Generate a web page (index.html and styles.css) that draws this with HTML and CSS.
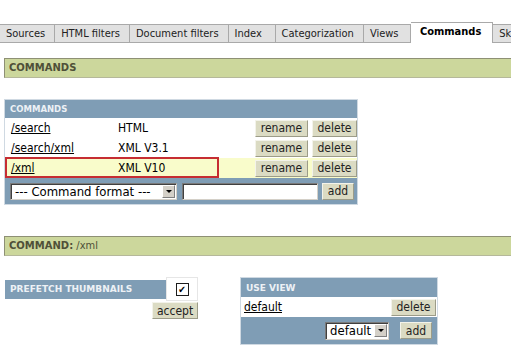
FILE: index.html
```html
<!DOCTYPE html>
<html lang="en">
<head>
    <meta charset="UTF-8">
    <title>Commands</title>
    <link rel="stylesheet" href="styles.css">
</head>
<body>
<div class="tabs">
    <a class="tab" href="#">Sources</a>
    <a class="tab" href="#">HTML filters</a>
    <a class="tab" href="#">Document filters</a>
    <a class="tab" href="#">Index</a>
    <a class="tab" href="#">Categorization</a>
    <a class="tab" href="#">Views</a>
    <a class="tab active" href="#">Commands</a>
    <a class="tab" href="#">Skins</a>
</div>

<div class="bar"><b>COMMANDS</b></div>

<div class="box commands">
    <div class="box-head">COMMANDS</div>
    <div class="row">
        <div class="cells">
            <a class="cmd" href="#">/search</a>
            <span class="fmt">HTML</span>
        </div>
        <button class="btn rename">rename</button>
        <button class="btn del">delete</button>
    </div>
    <div class="row">
        <div class="cells">
            <a class="cmd" href="#">/search/xml</a>
            <span class="fmt">XML V3.1</span>
        </div>
        <button class="btn rename">rename</button>
        <button class="btn del">delete</button>
    </div>
    <div class="row current">
        <div class="cells selected">
            <a class="cmd" href="#">/xml</a>
            <span class="fmt">XML V10</span>
        </div>
        <button class="btn rename">rename</button>
        <button class="btn del">delete</button>
    </div>
    <div class="box-foot">
        <div class="select wide"><span>--- Command format ---</span><i class="arrow"></i></div>
        <input class="name" type="text">
        <button class="btn add">add</button>
    </div>
</div>

<div class="bar second"><b>COMMAND:</b> /xml</div>

<div class="details">
    <div class="prefetch">
        <div class="prefetch-line">
            <div class="box-head">PREFETCH THUMBNAILS</div>
            <div class="check-cell"><span class="check">&#10004;</span></div>
        </div>
        <button class="btn accept">accept</button>
    </div>

    <div class="box views">
        <div class="box-head">USE VIEW</div>
        <div class="row">
            <a class="cmd" href="#">default</a>
            <button class="btn del">delete</button>
        </div>
        <div class="box-foot">
            <div class="select small"><span>default</span><i class="arrow"></i></div>
            <button class="btn add">add</button>
        </div>
    </div>
</div>
</body>
</html>
```

FILE: styles.css
```css
body {
    margin: 0;
    font-family: "DejaVu Sans Condensed", "DejaVu Sans", sans-serif;
    font-size: 12px;
    color: #000;
    background: #fff;
    overflow: hidden;
}
.tabs {
    display: flex;
    align-items: flex-end;
    padding-top: 22px;
    border-bottom: 1px solid #a9a9a9;
    white-space: nowrap;
}
.tab {
    display: block;
    flex: none;
    box-sizing: border-box;
    min-width: 47px;
    height: 18px;
    line-height: 17px;
    padding: 0 9px 0 6px;
    background: #e1e1e1;
    border-top: 1px solid #a9a9a9;
    border-right: 1px solid #a9a9a9;
    color: #222;
    font-size: 11px;
    text-decoration: none;
}
.tab.active {
    height: 21px;
    line-height: 18px;
    margin-bottom: -1px;
    padding: 0 11px 0 9px;
    background: #fff;
    font-weight: bold;
    color: #000;
}
.bar {
    margin: 15px 0 0 4px;
    width: 600px;
    height: 18px;
    line-height: 18px;
    padding-left: 4px;
    background: #ccd79c;
    border-top: 1px solid #8e9075;
    border-left: 1px solid #8e9075;
    border-bottom: 1px solid #b5b89a;
    color: #4f5038;
    font-size: 11px;
}
.bar b {
    font-family: "DejaVu Sans", sans-serif;
    font-size: 10px;
}
.bar.second {
    margin-top: 31px;
}
.box {
    background: #7f9db5;
    border: 1px solid #cfd9e2;
}
.commands {
    margin: 21px 0 0 4px;
    width: 352px;
}
.box-head {
    height: 18px;
    line-height: 18px;
    padding-left: 5px;
    color: #edf1f5;
    font-family: "DejaVu Sans", sans-serif;
    font-size: 8.5px;
    font-weight: bold;
}
.row {
    display: flex;
    align-items: center;
    height: 20px;
    background: #fff;
}
.row.current {
    background: #f9fccb;
}
.cells {
    display: flex;
    align-items: center;
    box-sizing: border-box;
    width: 214px;
    height: 20px;
    padding-left: 4px;
    border: 2px solid transparent;
}
.cells.selected {
    border-color: #c62d32;
    height: 21px;
    margin-top: -1px;
}
.cmd {
    width: 107px;
    color: #000;
}
.fmt {
    flex: 1;
}
.btn {
    height: 17px;
    padding: 0;
    margin: 0;
    background: #dbdbc3;
    border: 1px solid;
    border-color: #f3f3ea #9c9c88 #9c9c88 #f3f3ea;
    color: #222;
    font-family: "DejaVu Sans Condensed", "DejaVu Sans", sans-serif;
    font-size: 12px;
    line-height: 14px;
}
.rename {
    width: 53px;
    margin-left: 36px;
}
.del {
    width: 45px;
    margin-left: 4px;
}
.box-foot {
    display: flex;
    align-items: center;
    height: 26px;
    padding: 0 3px 0 5px;
}
.select {
    display: flex;
    align-items: center;
    height: 15px;
    background: #fff;
    border: 1px solid #7a7a7a;
    border-right-color: #d4d0c8;
    border-bottom-color: #d4d0c8;
    box-shadow: inset 1px 1px 0 #404040;
    padding-left: 4px;
    font-size: 13px;
    white-space: nowrap;
}
.select span {
    flex: 1;
}
.select .arrow {
    position: relative;
    flex: none;
    width: 13px;
    height: 13px;
    margin-right: 1px;
    background: #d4d0c8;
    border: 1px solid;
    border-color: #fff #808080 #808080 #fff;
    box-sizing: border-box;
}
.select .arrow::after {
    content: "";
    position: absolute;
    left: 3px;
    top: 4px;
    border: 3px solid transparent;
    border-top: 3px solid #000;
    border-bottom: none;
}
.select.wide {
    width: 161px;
}
.name {
    width: 134px;
    height: 15px;
    margin-left: 5px;
    padding: 0;
    border: 1px solid #7a7a7a;
    border-right-color: #d4d0c8;
    border-bottom-color: #d4d0c8;
    box-shadow: inset 1px 1px 0 #404040;
}
.add {
    width: 32px;
    margin-left: auto;
}
.details {
    display: flex;
    align-items: flex-start;
    margin: 21px 0 0 4px;
}
.prefetch {
    display: flex;
    flex-direction: column;
    align-items: flex-end;
    width: 194px;
}
.prefetch-line {
    display: flex;
    align-items: center;
}
.prefetch .box-head {
    width: 156px;
    height: 19px;
    line-height: 19px;
    background: #7f9db5;
    font-size: 9px;
}
.check-cell {
    display: flex;
    align-items: center;
    justify-content: center;
    width: 30px;
    height: 22px;
    border: 1px solid #e6e6e6;
}
.check {
    width: 11px;
    height: 11px;
    border: 1px solid #1c1c1c;
    font-size: 10px;
    line-height: 11px;
    text-align: center;
}
.accept {
    width: 46px;
    margin-top: 1px;
}
.views {
    width: 196px;
    margin-left: 42px;
    padding-top: 1px;
}
.views .box-head {
    font-size: 9px;
}
.views .row {
    padding-left: 3px;
}
.views .cmd {
    flex: 1;
}
.views .del {
    margin-right: 1px;
}
.views .box-foot {
    height: 27px;
    justify-content: flex-end;
}
.select.small {
    width: 58px;
    height: 16px;
}
.views .add {
    margin: 0 2px 0 11px;
}
```
